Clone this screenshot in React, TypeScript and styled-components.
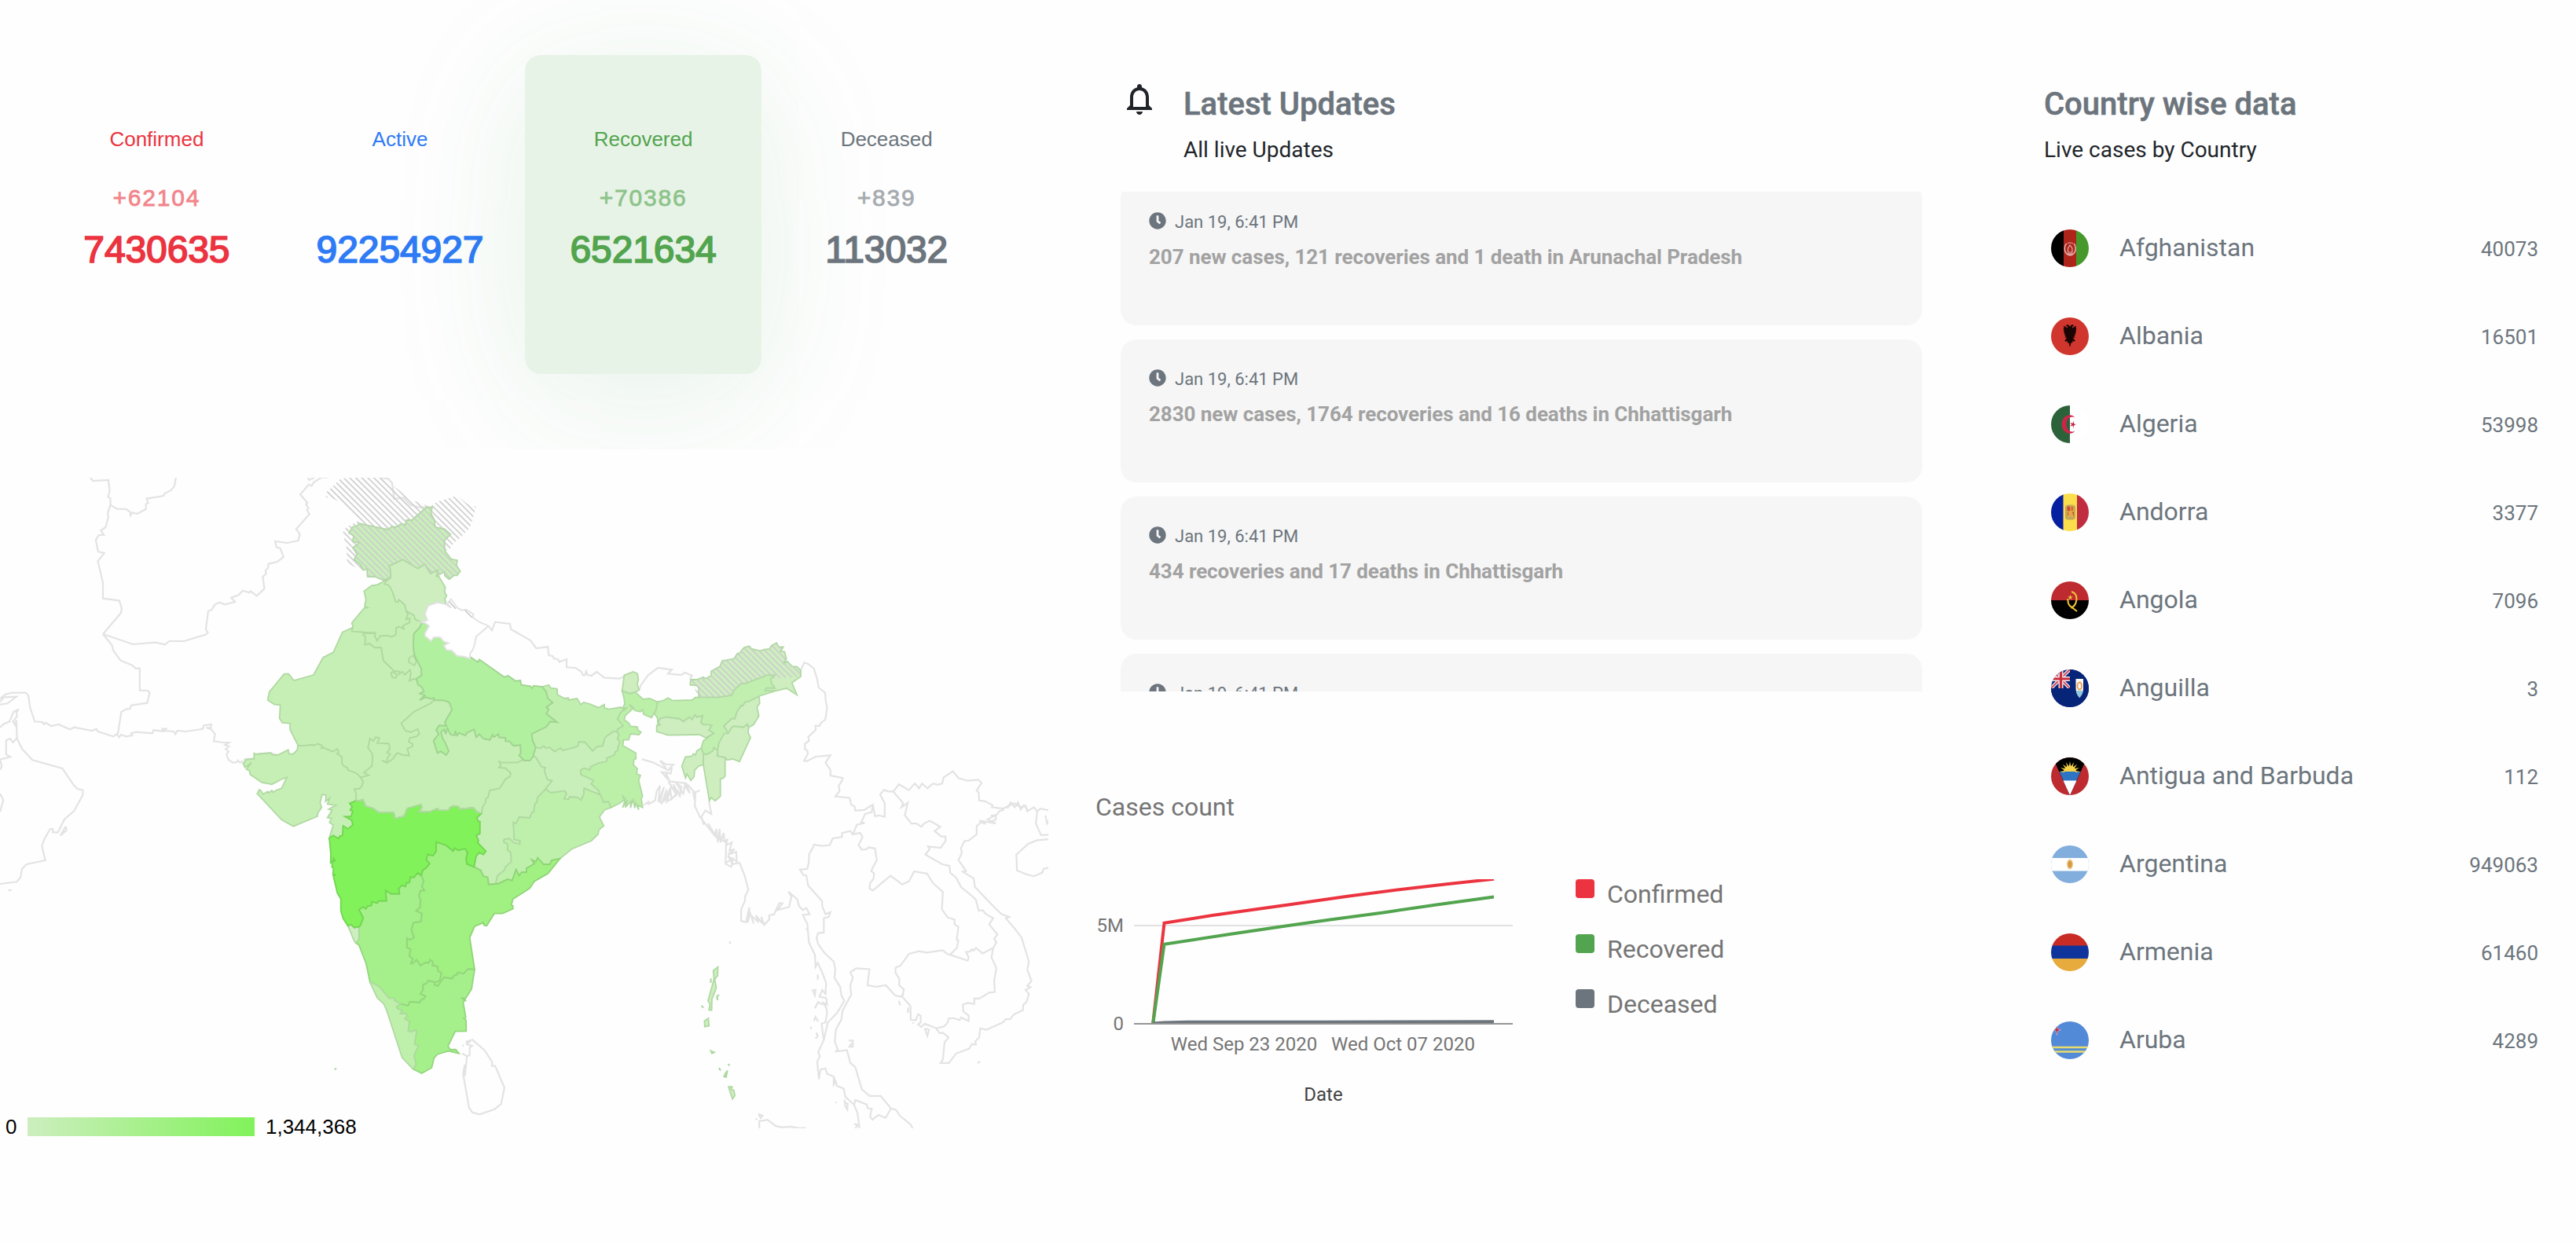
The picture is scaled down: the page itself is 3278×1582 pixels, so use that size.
import React from 'react';
import styled, { createGlobalStyle } from 'styled-components';

const GlobalStyle = createGlobalStyle`
  *, *::before, *::after { box-sizing: border-box; }
  body { margin: 0; background: #fefefe; font-family: Roboto, "Liberation Sans", sans-serif; color: #212529; }
  h2, p, ul { margin: 0; padding: 0; }
  ul { list-style: none; }
`;

const Page = styled.main`
  display: grid;
  grid-template-columns: 1334px 1200px 1fr;
  width: 3278px;
  height: 1582px;
  overflow: hidden;
`;

const Column = styled.section`
  display: flex;
  flex-direction: column;
  min-width: 0;
`;

/* ---------- stats ---------- */

const Stats = styled.div`
  display: flex;
  gap: 8px;
  height: 572px;
  padding: 70px 48px 0 48.6px;
  overflow: hidden;
`;

const StatCard = styled.div<{ $color: string; $active?: boolean }>`
  display: flex;
  flex-direction: column;
  align-items: center;
  width: 301.6px;
  height: 406px;
  padding-top: 88px;
  border-radius: 20px;
  font-family: "Liberation Sans", Arial, sans-serif;
  color: ${(p) => p.$color};
  background: ${(p) => (p.$active ? '#e8f3e7' : 'transparent')};
  box-shadow: ${(p) => (p.$active ? '0 30px 180px rgba(60, 160, 80, 0.12)' : 'none')};
`;

const StatLabel = styled.span`
  font-size: 26px;
  line-height: 39px;
`;

const StatDelta = styled.span`
  height: 45px;
  margin-top: 32px;
  font-size: 30px;
  line-height: 45px;
  letter-spacing: 1.8px;
  -webkit-text-stroke: 0.8px currentColor;
  opacity: 0.6;
`;

const StatTotal = styled.span`
  margin-top: 15px;
  font-size: 48px;
  line-height: 58px;
  letter-spacing: -0.1px;
  -webkit-text-stroke: 1.7px currentColor;
`;

const stats = [
  { label: 'Confirmed', delta: '+62104', total: '7430635', color: '#eb3440' },
  { label: 'Active', delta: '', total: '92254927', color: '#2f7bf6' },
  { label: 'Recovered', delta: '+70386', total: '6521634', color: '#52a44e', active: true },
  { label: 'Deceased', delta: '+839', total: '113032', color: '#6c757d' },
];

/* ---------- map ---------- */

type Point = [number, number];

/* Outlines are stored per tile; each tile has its own origin and unit size. */
const tile = (ox: number, oy: number, sx: number, sy: number) => (s: string): Point[] =>
  s.trim().split(/\s+/).map((pair) => {
    const [x, y] = pair.split(',').map(Number);
    return [ox + x * sx, oy + y * sy];
  });

const third = 1 / 3;
const north = tile(300, 600, third, third);
const east = tile(640, 760, third, third);
const south = tile(300, 980, third, third);
const indochina = tile(680, 900, 660 / 1568, 540 / 1568);
const west = tile(0, 600, 680 / 1568, third);
const gulf = tile(0, 960, 660 / 1568, third);

const rev = (line: Point[]) => [...line].reverse();
const str = (...lines: Point[][]) =>
  lines.flat().map(([x, y]) => `${x.toFixed(1)},${y.toFixed(1)}`).join(' ');

const jkHp = north('592,405 590,370 585,362 638,337 695,371 722,355 743,390 772,377 766,400');
const hpPb = north('592,405 572,420 568,430 580,432 590,443 600,465 610,497 618,500 623,490 645,510 650,532');
const pbHr = north('650,532 658,545 650,565 665,560 663,578 650,583 638,590 642,602 625,593 612,598 612,623 595,632 580,627 552,628 540,647 530,628 533,617');
const pbRj = north('533,617 443,611');
const hrRj = north('533,617 487,618 487,626 495,630 493,662 510,658 530,673 555,672 563,722 605,763 593,768 597,787 612,788 615,776 605,768 615,762 625,765 622,775 637,765 645,777 665,758 668,770 663,800 675,794 690,792');
const hpHr = north('650,532 680,550 685,565 710,577');
const hrUp = north('710,577 705,592 680,620 678,655 680,690 685,708 708,752 710,778 690,792');
const hpUk = north('803,508 770,500 735,512 722,545 732,568 708,575');
const ukUp = north('708,575 725,580 738,590 722,618 723,630 733,636 745,648 757,633 780,633 795,650 812,655 795,665 805,682 825,684 845,704 872,707 893,715');
const rjUp = north('690,792 695,813 712,825 718,840 703,848 722,855 703,873 725,862 745,868 757,865 757,873');
const rjMp = north('757,873 745,885 680,918 632,962 648,990 668,995 695,983 701,1003 690,1012 665,1018 660,1032 675,1040 675,1050 655,1060 663,1085 637,1083 617,1075 607,1087 600,1098 577,1113 558,1103 575,1110 580,1092 590,1080 577,1073 588,1060 585,1040 540,1037 548,1018 535,1015 525,1030 512,1020 505,1055 520,1075 523,1092 520,1125 490,1150 508,1160 477,1168');
const rjGj = north('237,1045 250,1048 293,1044 297,1047 313,1040 330,1047 327,1057 335,1055 370,1070 388,1060 393,1073 386,1077 405,1090 405,1115 415,1127 425,1130 428,1140 460,1152 477,1168');
const gjMh = south('357,260 372,250 393,262 397,252 408,250 410,213 428,225 447,210 443,192 418,178 440,178 447,157 437,153 445,140 435,127 458,118');
const gjMp = south('458,118 460,90 453,73 470,72 480,65 487,45 477,28');
const upMp = north('757,873 795,874 815,882 826,910 798,958 805,972 777,970 765,987 775,1003 755,1028 770,1075 782,1068 803,1083 813,1068 798,1033 790,1020 783,995 795,985 802,1000 808,980 820,1005 836,1007 838,990 845,1008 852,998 877,1008 882,998 910,985 918,1015 930,1003 945,1020 970,1025 980,1005 985,1015 1003,1003 1005,1015 1030,1017 1030,1030 1045,1030 1060,1047 1087,1045 1088,1075 1082,1085 1102,1104');
const mpCg = north('1102,1104 1095,1102 1075,1112 1010,1112 1005,1105 1012,1122 1005,1130 1030,1133 1050,1152 1047,1165 1030,1175 1008,1210 970,1218 963,1245 955,1250 953,1265 943,1280 938,1306');
const mpMh = south('458,118 472,118 485,113 495,138 525,147 545,162 603,163 608,185 643,177 655,147 707,132 710,142 700,160 740,160 770,147 775,153 812,153 820,142 835,137 852,142 855,150 907,144 920,160 938,166');
const mhCg = south('938,166 920,182 925,195 932,197 932,243 918,250 927,270 923,277 955,310 945,323 930,315 917,330 910,370');
const mhTs = south('910,370 882,358 880,337 885,315 875,300 850,307 835,298 830,310 803,287 765,275 765,310 753,327 733,322 727,342 740,358 723,377 715,380 708,403');
const mhKa = south('708,403 695,392 680,410 667,408 663,430 652,430 648,445 635,440 622,453 625,473 593,473 572,460 575,500 545,500 540,508 520,503 518,517 503,520 497,530 487,523 470,533 487,565 475,595 470,598');
const mhGa = south('470,598 453,602 440,590 428,595');
const kaGa = south('470,598 470,648 458,660');
const upCg = east('82,624 103,624 115,608');
const upJh = east('125,573 120,590 115,608');
const cgJh = east('115,608 125,610 148,648 162,650 158,662 170,697 188,700 163,733');
const cgOd = [
  ...east('163,733 132,765 130,783 122,790 118,820 110,823 102,843 62,840 50,865 40,860 43,925'),
  ...south('1085,270 1085,283 1060,277 1045,262 1025,265 1023,275 1038,283 1038,305 1050,315 1052,350 1030,370 1027,382 1000,403 992,435'),
];
const cgAp = south('910,370 935,383 945,405 962,410 965,437 992,435');
const odAp = [
  ...south('992,435 1005,433 1037,417 1055,422 1070,380 1082,403 1092,390 1110,390'),
  ...east('90,1050 90,1035 120,1018 110,1003 125,1010 133,995 155,1020 180,1020 185,1005 218,998'),
];
const upBh = east('150,342 165,362 170,385 190,403 165,420 175,428 165,445 207,478 180,475 165,495 110,522 113,548 125,573');
const bhWb = east('457,425 475,422 450,440 437,465 460,492 437,505 437,513');
const bhJh = east('125,573 145,577 155,568 165,577 178,573 197,590 220,575 228,585 285,570 290,552 313,553 342,587 360,570 380,568 390,535 422,512 437,515');
const jhWb = east('437,515 443,525 437,540 447,553 440,570 437,587 430,590 425,603 397,615 395,628 367,633 335,648 332,660 310,653 297,660 297,677 347,700 337,713 365,738 372,755');
const jhOd = east('372,755 310,730 308,755 298,775 285,765 255,763 250,773 233,770 242,752 238,740 182,747 163,733');
const wbOd = east('372,755 380,770 383,783 403,780 413,803');
const apTn = south('912,762 887,760 870,778 848,773 845,782 833,785 827,797 795,792 772,825 758,820 760,810');
const apKa = south('760,810 778,805 785,775 772,768 770,750 750,747 753,733 742,725 737,737 725,735 705,747 690,725 675,740 668,740 675,720 662,710 667,685 653,678 653,642 665,648 680,640 670,610 678,583 707,578 710,548 688,537 703,525 705,493 698,482 705,460 720,460 710,445 717,423 708,403');
const kaTn = south('760,810 735,805 728,815 715,820 715,840 705,855 725,863 717,875 710,875 702,888 665,885 658,900 630,893');
const kaKl = south('630,893 605,880 605,872 585,872 548,828 520,812 513,812');
const klTn = south('630,893 613,903 617,912 635,918 628,930 650,930 655,940 645,950 663,960 658,997 670,1000 688,993 690,1003 682,1047 697,1053 680,1090 688,1123 677,1142');

const jammu = [
  ...north('563,415'), ...jkHp,
  ...north('797,383 798,398 815,412 833,397 845,397 857,381 842,358 846,340 823,335 802,308 797,300 797,264 820,240 797,220 762,213 757,182 745,160 750,137 728,137 672,186 652,186 648,203 632,200 610,213 597,210 580,222 500,205 472,199 462,208 446,212 432,235 450,245 447,268 472,272 447,292 463,315 452,337 475,355 487,377 501,372 503,402 530,402'),
];
const arunachalHill = east('717,315 740,315 765,305 772,311 795,300 795,283 828,265 837,243 883,235 895,215 902,215 920,193 940,187 950,198 982,205 998,200 1018,198 1025,185 1045,175 1052,190 1070,190 1060,207 1075,208 1082,235 1070,255 1085,245 1105,265 1122,265 1137,280 1137,303');
const arAs = east('1040,358 1000,357 1005,347 1038,347 1025,330 1022,312 1037,298 1008,298 925,330 910,330 883,355 873,375 820,383 747,383');

const states: { fill: string; line?: string; d: Point[] }[] = [
  { fill: '#c8efb9', d: jammu },
  { fill: '#ceeec0', d: [...jkHp, ...north('776,402 800,443 797,460 805,475 798,487'), ...hpUk, ...rev(hpHr), ...rev(hpPb)] },
  { fill: '#c6efb5', d: [...hpPb, ...pbHr, ...pbRj, ...north('447,592 443,578 490,522 503,520 492,515 497,488 490,457 520,435 540,433')] },
  { fill: '#c6efb5', d: [...pbHr, ...hrRj, ...rev(hrUp), ...rev(hpHr)] },
  { fill: '#c6efb5', d: [...rev(hrRj), ...pbRj, ...north('445,597 407,614 373,690 333,711 297,777 222,798 202,773 185,773 128,842 122,873 148,890 170,892 167,943 178,960 207,962 208,987'), ...rjGj, ...rev(rjMp), ...rev(rjUp)] },
  { fill: '#c6efb5', d: north('662,712 678,703 690,725 682,740 660,728') },
  { fill: '#c6efb5', d: [...rev(rjGj), ...north('235,1063 218,1080 203,1078 200,1063 160,1083 140,1082 133,1075 72,1080 70,1073 70,1098 40,1100 28,1115 35,1130 60,1112 40,1137 52,1142 55,1157 100,1188 138,1195 175,1175'), ...south('195,28 175,70 155,77 143,85 138,78 125,88 122,82 105,92 95,78 90,75 82,90 175,190 220,215 312,177 313,165 328,143 322,125 330,93 345,97 343,120 358,108 350,130 382,135 355,150 368,153 350,182 365,185 358,200 372,210'), ...gjMh, ...gjMp] },
  { fill: '#c6efb5', d: [...upMp, ...mpCg, ...rev(mpMh), ...gjMp, ...rev(rjMp)] },
  { fill: '#c6efb5', d: [...mpCg, ...mhCg, ...cgAp, ...rev(cgOd), ...rev(cgJh), ...rev(upCg)] },
  { fill: '#c8efb9', d: [...bhJh, ...jhWb, ...jhOd, ...rev(cgJh), ...rev(upJh)] },
  { fill: '#c1efb0', d: [...east('150,342 175,335 183,347 207,350 208,372 235,387 250,385 250,393 283,387 297,410 308,402 332,408 365,422 387,410 388,423 405,428 450,420'), ...bhWb, ...rev(bhJh), ...rev(upBh)] },
  { fill: '#bef0ac', d: [...jhOd, ...cgOd, ...odAp, ...east('262,962 338,930 363,905 367,888 385,873 368,840 388,812'), ...rev(wbOd)] },
  { fill: '#bcf0a9', d: [...bhWb, ...jhWb, ...wbOd, ...east('443,788 462,775 458,760 468,770 457,803 475,775 467,803 488,780 487,805 497,770 503,805 506,785 518,812 515,795 533,803 528,770 533,760 518,700 525,680 510,675 513,655 498,640 500,620 508,617 507,595 458,567 460,545 480,545 487,522 520,525 527,515 515,508 513,495 487,493 480,480 463,468 467,452 495,427 482,410 497,420 503,433 525,437 533,430 537,447 567,460 578,443 585,430 590,400 560,387 535,390 505,362 485,368 455,358 462,385 465,408')] },
  { fill: '#b1f09e', line: '#a0d391', d: [...hrUp, ...rjUp, ...upMp, ...upCg, ...rev(upJh), ...rev(upBh), ...north('1137,818 1132,828 1125,820 1090,815 1087,798 1068,800 1040,780 1025,785 930,718 925,728 895,708'), ...rev(ukUp)] },
  { fill: '#a0f082', line: '#8fd476', d: [...mhTs, ...rev(apKa), ...rev(apTn), ...south('893,640 912,597 945,583 948,593 958,595 987,548 1018,548 1058,530 1058,518 1052,515 1058,493'), ...east('102,1112 120,1085 172,1055'), ...rev(odAp), ...rev(cgAp)] },
  { fill: '#a5f08a', line: '#94d57e', d: [...mhKa, ...kaGa, ...south('470,668 497,737'), ...rev(kaKl), ...rev(kaTn), ...apKa] },
  { fill: '#a5f08a', line: '#94d57e', d: [...apTn, ...kaTn, ...klTn, ...south('710,1158 748,1137 757,1100 770,1085 812,1073 852,1082 840,1067 820,1068 810,1055 838,998 880,997 879,955 870,948 878,945 868,885 877,880 860,870 877,873 900,837')] },
  { fill: '#bef0ac', d: [...rev(kaKl), ...klTn, ...south('635,1098 575,915 565,893 540,870')] },
  { fill: '#ceeec0', d: [...mhGa, ...south('452,652'), ...rev(kaGa)] },
  { fill: '#81f25a', line: '#72d651', d: [...mhKa, ...mhGa, ...south('410,567 401,537 401,492 388,470 372,403 382,401 371,398 373,375 367,370 369,352 382,345 373,345 375,333 368,352 362,355 363,320 357,260'), ...gjMh, ...mpMh, ...mhCg, ...mhTs] },
  { fill: '#ceeec0', d: east('455,358 463,298 497,285 513,292 517,315 513,332 520,355 505,362 485,368') },
  { fill: '#ceeec0', d: [...arunachalHill, ...east('1103,327 1122,373 1083,348'), ...arAs, ...east('748,350 742,338 715,335')] },
  { fill: '#ceeec0', d: east('978,378 980,405 970,420 977,453 957,487 938,497 933,485 918,497 885,493 875,495 860,520 843,492 875,462 885,465 893,437 910,413 915,415 925,400 940,397') },
  { fill: '#c1efb0', d: [...east('978,378'), ...arAs, ...east('735,383 722,393 648,395 630,385 612,395 590,400 585,430 578,443 590,463 592,490 625,458 670,463 688,475 713,458 722,468 733,450 740,458 763,453 755,478 765,487 797,490 785,508 805,520 777,540 765,548 757,575 765,598 780,600 802,587 805,575 820,585 825,555 860,520 843,492 875,462 885,465 893,437 910,413 915,415 925,400 940,397')] },
  { fill: '#ceeec0', d: east('587,513 587,490 600,488 592,480 600,463 625,458 670,465 673,463 688,475 713,458 722,468 733,450 740,458 763,453 755,478 765,487 787,487 797,490 785,508 805,520 775,537 750,525 630,527') },
  { fill: '#ceeec0', d: east('860,520 875,495 885,493 918,497 933,485 938,503 935,515 945,537 903,628 877,618 855,622 848,612 820,607 820,583 825,555 845,520') },
  { fill: '#ceeec0', d: east('780,600 802,587 805,575 820,585 818,607 848,612 848,683 840,692 830,693 830,760 810,778 795,765 788,778 765,640 765,600') },
  { fill: '#ceeec0', d: east('757,577 765,598 765,640 747,645 732,660 730,685 717,700 703,675 697,690 683,645 697,610 722,607 727,598 735,603 740,587') },
  { fill: '#ceeec0', d: indochina('555,960 541,973 543,1005 525,1085 531,1098 528,1119 536,1120 537,1078 550,1038 545,1005 554,992') },
  { fill: '#ceeec0', d: indochina('514,1160 526,1150 528,1178 515,1181') },
  { fill: '#ceeec0', d: indochina('587,1403 598,1403 595,1412 603,1416 606,1435 599,1448 591,1420') },
  { fill: '#a8d49c', d: indochina('533,1270 544,1276 537,1280') },
  { fill: '#a8d49c', d: indochina('578,1352 584,1343 580,1368 573,1365') },
];

const isletDashes = [
  indochina('505,1103 511,1111'), indochina('558,1063 552,1070 554,1083'), indochina('558,1333 563,1343'),
  indochina('586,1319 590,1325'), indochina('534,1003 533,1019'), south('377,1144 384,1139'),
];

const uttarakhand = [...hpUk, ...ukUp, ...north('895,695 905,680 912,660 918,630 965,590 930,575 905,557 907,545 880,527 862,530 845,520 822,488 807,505 822,520')];

const worldLines: Point[][] = [
  west('265,24 273,36 318,33 322,75 317,97 324,103 324,128 343,143 370,144 382,155 383,167 388,157 402,162 428,144 428,125 435,120 430,104 480,93 483,84 502,72 512,55 516,24'),
  west('324,128 316,160 318,175 310,213 296,225 305,242 290,243 281,262 288,306 306,312 287,343 302,425 302,485 350,493 357,522 355,540 302,621'),
  west('302,621 390,660 456,653 484,661 497,648 540,648 603,623 610,615 604,603 611,533 621,528 631,508 644,500 660,508 690,498 678,482 700,472 712,455 732,463 735,457 753,475 776,448 771,402 781,390 779,378 786,370 788,353 815,344 832,326 822,293 812,290 807,267 843,273 875,264 880,240 869,220 908,163 901,148 905,140 898,125 902,120 881,88 906,50 915,55 920,42 942,24 965,22'),
  west('903,22 907,33 925,22'),
  west('302,621 328,662 333,685 354,722 388,740 398,752 410,752 410,836 434,837 439,846 432,884 385,893 381,907 372,907 356,918 346,1000 342,1008'),
  west('0,890 22,886 48,860 12,862 0,880'),
  west('0,868 15,852 35,845 75,845 83,855 88,900 102,955 125,957 128,965 135,960 150,972 172,966 205,985 218,977 270,990 283,983 287,993 333,1012 342,1003 350,1015 355,1005 370,1012 388,1008 385,1000 400,995 447,1000 450,988 478,992 476,983 487,983 482,990 510,993 515,1003 520,990 545,993 595,983 598,970 620,966 618,980 605,978 620,985 631,1003 627,1030 655,1035 672,1035 660,1045 672,1050 662,1060 671,1070 665,1080 670,1100 683,1112 695,1110 698,1103 705,1112 712,1104'),
  west('715,1100 745,1095 760,1078 795,1075 815,1083'),
  west('0,978 10,965 28,955 40,918 55,908 48,920 50,935 38,955 44,968 48,950 50,1020 65,1060 95,1102 183,1134 216,1197 227,1212 243,1217 243,1235 217,1297 189,1328 170,1378 155,1378 155,1365 147,1365 130,1405 123,1430 133,1485 78,1500 65,1517 60,1550 49,1567 0,1575'),
  west('193,1355 195,1370 177,1390 193,1355'),
  west('48,1020 38,1035 30,1020 18,1027 18,1080 30,1090 0,1100 5,1125 0,1140'),
  west('0,1230 10,1255 0,1300'),
  gulf('25,519 35,519'),
  north('555,24 583,28 597,45 605,105 640,100 665,127 700,137 745,137'),
  east('-55,110 -42,127 -30,95 27,102 30,122 105,165 127,195 172,190 175,222 190,225 195,235 210,237 215,247 243,237 243,268 277,270 300,285 305,298 313,298 318,283 323,297 338,300 358,285 388,308 445,311 462,303'),
  east('520,355 527,335 555,297 592,270 645,277 630,292 680,297 695,288 722,300 713,313'),
  [...east('1137,280 1150,250 1165,255 1187,273 1200,315 1205,345 1230,365 1232,395'), ...indochina('885,0 880,45 865,60 862,70 850,68 850,85 828,110 830,125 818,135 818,155 825,160 827,172 815,198 823,200 850,183 895,178 880,205 895,232 895,253 932,262 930,272 920,290 923,310 910,330 953,335 958,360 968,367 970,382 997,380 1023,360 1030,403 1042,400 1059,405 1059,355 1045,323 1057,306 1070,312 1085,312 1102,285 1132,307 1150,282 1163,300 1172,282 1188,300 1205,282 1220,287 1233,282 1237,260 1265,237 1282,262 1310,272 1342,268 1352,280 1337,308 1343,315 1345,345 1363,348 1385,362 1383,370 1418,375 1450,355 1470,370 1485,365 1490,385 1510,370 1520,385 1530,375 1568,384')],
  indochina('1023,360 1020,388 1000,395 988,425 998,428 975,435 963,470 985,465 992,480 980,510 990,527 1005,525 1010,518 1030,522 1035,565 1018,605 1027,615 1025,635 1015,650 1013,670 1023,678 1055,645 1065,635 1077,623 1112,655 1133,643 1148,607 1187,615 1205,650 1235,683 1232,747 1250,778 1270,785 1270,803 1282,812 1277,860 1282,862 1277,890 1257,915'),
  indochina('963,470 955,458 930,465 930,480 902,485 893,510 870,513 845,508 843,517 830,545 830,570 825,598 803,600 813,620 822,622 828,660 870,717 870,735 880,765 895,758 890,775 875,780 875,833 858,835 853,853 858,875 877,908 905,940 910,970 907,1000 925,1035 928,1065 937,1085 915,1130 887,1165 875,1230 858,1275 863,1290 855,1310 860,1375 865,1340 880,1335 885,1355 905,1365 915,1400 935,1410 940,1440 967,1470 977,1500 983,1558'),
  indochina('1085,312 1115,355 1110,370 1129,353 1120,400 1140,430 1155,430 1170,442 1178,430 1195,420 1227,442 1210,458 1230,478 1243,478 1243,495 1228,520 1190,515 1195,525 1182,545 1232,580 1255,587 1257,612 1275,630 1290,665 1320,695 1335,712 1343,752 1355,750 1365,765 1387,780 1375,803 1400,840 1390,855 1397,870 1387,890 1382,925 1397,965 1390,1010 1392,1053 1375,1055 1345,1077 1330,1077 1330,1097 1310,1093 1295,1100 1297,1125 1313,1140 1313,1160 1290,1147 1285,1157 1270,1150 1253,1150 1250,1165 1238,1180 1215,1187'),
  indochina('1257,915 1248,912 1235,898 1187,907 1162,902 1132,912 1107,955 1092,963 1092,982 1103,1003 1103,1028 1117,1043 1112,1070 1137,1105 1138,1155 1153,1157 1160,1135 1168,1140 1168,1165 1160,1173 1170,1182 1180,1170 1215,1187 1225,1205 1235,1203 1252,1220 1240,1240 1235,1303 1228,1315 1253,1315 1275,1280 1315,1262 1322,1245 1335,1247 1333,1235 1345,1220 1348,1187 1367,1192 1417,1165 1425,1153 1438,1153 1450,1135 1477,1120 1478,1100 1488,1090 1495,1060 1485,1045 1500,1035 1490,1030 1503,1012 1490,970 1495,940 1473,852 1450,815 1425,780 1436,775 1413,765 1395,745 1332,665 1328,633 1295,608 1305,605 1282,565 1292,540 1290,520 1300,495 1313,493 1337,470 1337,440 1350,425 1365,432 1345,420 1375,425 1395,430 1370,415 1385,405 1400,395 1405,385 1420,378'),
  indochina('1380,400 1395,400 1395,415 1375,425'),
  indochina('1430,375 1440,352 1452,370 1462,352 1470,378 1480,362 1492,380'),
  indochina('1257,915 1310,937 1313,925 1305,905 1318,903 1322,895 1328,900 1335,890 1355,910 1387,890'),
  indochina('1117,1060 1107,1070 1090,1065 1063,1028 1035,1033 1007,1028 1013,968 973,965 955,980 963,1000 955,1030 958,1063 932,1120 928,1155 912,1190 908,1235 917,1265 912,1272 945,1268 955,1315 970,1330 990,1412 1013,1437 1047,1437 1078,1483 1093,1488 1105,1510 1137,1542 1145,1560'),
  indochina('967,1470 970,1452 1005,1468 1007,1482 1020,1485 1015,1513 1022,1525 1040,1507 1062,1518 1078,1483'),
  indochina('528,350 535,395 517,382 505,405 512,435'),
  indochina('455,278 470,295 487,320 485,365 500,405 545,475 550,450 555,500 560,450 563,500 572,465 575,495 583,490 580,510 597,500 590,530 605,525 585,545 610,535 612,570 585,550 600,580 620,575 625,590 635,620 647,675 637,700 637,715 625,747 625,790 640,795 650,740 645,795 652,760 663,800 655,770 678,795 670,770 690,800 686,775 695,805 710,785 710,770 725,765 740,725 750,725 735,750 770,738 777,700 768,682 795,710 800,735 812,750 822,742 832,765 812,768 818,785 825,800 830,870 848,915 850,960 857,945 870,980 882,1020 880,1060 870,1045 862,1070 882,1075 885,1100 870,1090 882,1110 885,1130 880,1165 868,1170 875,1230'),
  indochina('525,430 550,480 580,500 578,580 595,590 600,560 580,575'),
  indochina('325,192 360,205 400,230 380,197 398,212 420,212 405,232 415,228 412,245 385,240 400,262 398,245 410,275 450,280 465,290'),
  indochina('330,362 345,350 345,358 365,345 370,310 380,290 375,350 392,295 380,350 385,355 400,305 390,350 415,290 400,350 430,325 405,275 430,320 420,285 440,328 445,295 428,280 450,320 455,290 470,318 460,285'),
  indochina('395,345 412,315 415,340 435,310 440,330'),
  indochina('485,345 480,318 500,308'),
  indochina('1568,487 1520,492 1493,505 1457,545 1459,603 1487,618 1510,625 1535,612 1540,597 1568,590'),
  indochina('1520,387 1516,430 1532,473 1568,470 1568,462'),
  indochina('1545,400 1550,430 1560,410'),
  indochina('857,988 857,1007'), indochina('838,1048 850,1045 848,1065 843,1052'), indochina('848,1113 858,1090 870,1100'),
  indochina('845,1160 850,1145 858,1162'), indochina('835,1180 837,1190'), indochina('852,1203 857,1215 850,1225'),
  indochina('950,1232 963,1232 963,1255 952,1255 960,1242'), indochina('1180,1187 1193,1192 1188,1215 1180,1187'),
  indochina('1340,1316 1347,1309'), indochina('592,865 591,875'), indochina('1102,1085 1106,1102'), indochina('1130,1110 1130,1130'),
  indochina('1144,1165 1145,1170'), indochina('910,1461 914,1460'), indochina('937,1450 940,1475 946,1487 947,1465 940,1462'),
  indochina('905,1368 905,1395 912,1380'), indochina('967,1540 978,1545 970,1556'), indochina('822,818 822,823'),
  indochina('680,1560 680,1530 705,1525 730,1548 750,1553 775,1550 800,1556 820,1555'),
  indochina('677,1503 690,1510 684,1518 678,1506'), indochina('669,1521 674,1524'),
  gulf('1408,1098 1428,1090 1465,1130 1488,1175 1487,1190 1497,1190 1525,1273 1515,1335 1495,1355 1450,1375 1428,1367 1418,1350 1400,1220 1405,1185 1405,1230 1412,1153 1420,1148 1420,1120 1427,1113 1412,1108 1418,1100 1408,1102'),
  gulf('1397,1142 1412,1153'), gulf('1398,1110 1402,1114'),
];

const disputed = north('345,100 345,80 370,58 400,28 440,24 570,24 600,55 655,95 660,108 700,118 740,135 770,115 830,97 850,97 885,125 918,135 905,180 893,215 860,250 830,275 815,300 797,302 700,300 480,378 455,365 425,350 423,290 408,235 420,215 455,195 470,188 435,155 400,120 365,100');

const MapSvg = styled.svg`
  display: block;
  width: 1334px;
  height: 828px;
  margin-top: 36px;
`;

const WorldLine = styled.polyline`
  fill: none;
  stroke: #e3e3e3;
  stroke-width: 2.2;
`;

const IndiaMap = () => (
  <MapSvg viewBox="0 608 1334 828">
    <defs>
      <pattern id="hatch" width="5.45" height="5.45" patternUnits="userSpaceOnUse" patternTransform="rotate(45)">
        <rect width="5.45" height="1.6" fill="#cbcbcb" />
      </pattern>
    </defs>
    {worldLines.map((line, i) => (
      <WorldLine key={i} points={str(line)} />
    ))}
    <polygon points={str(disputed)} fill="url(#hatch)" />
    {states.map((s, i) => (
      <polygon key={i} points={str(s.d)} fill={s.fill} stroke={s.line ?? '#b0d9a2'} strokeWidth={1.8} />
    ))}
    {isletDashes.map((line, i) => (
      <polyline key={i} points={str(line)} fill="none" stroke="#a8d49c" strokeWidth={2} />
    ))}
    <polyline points={str(mpMh)} fill="none" stroke="#b3d9a6" strokeWidth={1.8} />
    <polygon points={str(jammu)} fill="url(#hatch)" />
    <polygon points={str(arunachalHill, arAs.slice(5))} fill="url(#hatch)" />
    <polygon points={str(uttarakhand)} fill="#ffffff" stroke="#e3e3e3" strokeWidth={2} />
    <polyline points={str(north('815,497 840,524'))} stroke="#c4c4c4" strokeWidth={1.4} fill="none" />
    <polyline points={str(north('875,530 902,557'))} stroke="#c4c4c4" strokeWidth={1.4} fill="none" />
  </MapSvg>
);

const MapLegend = styled.div`
  display: flex;
  align-items: center;
  height: 26px;
  margin-top: -15px;
  padding-left: 7px;
  font: 26px/26px "Liberation Sans", Arial, sans-serif;
  color: #000;
`;

const MapScale = styled.div`
  width: 289px;
  height: 24px;
  margin: 0 14px 0 13.5px;
  background: linear-gradient(to right, #cdeebf, #81f25a);
`;

/* ---------- headings ---------- */

const HeadingText = styled.div`
  display: flex;
  flex-direction: column;
  gap: 13px;
`;

const Title = styled.h2`
  font-size: 40px;
  line-height: 48px;
  font-weight: 500;
  color: #6c757d;
  -webkit-text-stroke: 0.6px currentColor;
`;

const Subtitle = styled.p`
  font-size: 28px;
  line-height: 42px;
`;

/* ---------- updates ---------- */

const Updates = styled.div`
  padding: 109px 88px 0 92px;
`;

const UpdatesHeader = styled.div`
  display: flex;
  gap: 32px;
  height: 135px;
`;

const Bell = styled.svg`
  width: 48px;
  height: 48px;
  margin-top: -7px;
  fill: #212529;
`;

const UpdateList = styled.ul`
  display: flex;
  flex-direction: column;
  gap: 18px;
  height: 636px;
  overflow: hidden;

  & > li:first-child {
    margin-top: -12px;
  }
`;

const UpdateCard = styled.li`
  flex: none;
  height: 182px;
  padding: 34px 36px;
  border-radius: 20px;
  background: #f6f6f6;
`;

const UpdateTime = styled.div`
  display: flex;
  align-items: center;
  gap: 11px;
  font-size: 22px;
  line-height: 33px;
  color: #6c757d;
`;

const Clock = styled.svg`
  width: 22px;
  height: 22px;
  margin-top: -3px;
  fill: currentColor;
`;

const UpdateText = styled.p`
  margin-top: 9px;
  font-size: 26px;
  line-height: 39px;
  font-weight: 700;
  letter-spacing: -0.07px;
  color: #a2a2a2;
`;

const updates = [
  '207 new cases, 121 recoveries and 1 death in Arunachal Pradesh',
  '2830 new cases, 1764 recoveries and 16 deaths in Chhattisgarh',
  '434 recoveries and 17 deaths in Chhattisgarh',
  '',
];

/* ---------- chart ---------- */

const ChartSection = styled.div`
  padding: 127px 0 0 60px;
`;

const ChartTitle = styled.p`
  font-size: 32px;
  line-height: 40px;
  color: #757575;
`;

const ChartBody = styled.div`
  display: flex;
`;

const ChartSvg = styled.svg`
  width: 560px;
  height: 373px;
  font-family: Roboto, sans-serif;
  font-size: 24px;
  fill: #757575;
`;

const ChartLine = styled.polyline`
  fill: none;
  stroke-width: 4;
`;

const ChartLegend = styled.ul`
  display: flex;
  flex-direction: column;
  gap: 32px;
  padding: 72px 0 0 51px;
`;

const LegendItem = styled.li<{ $color: string }>`
  display: flex;
  gap: 16px;
  font-size: 32px;
  line-height: 38px;
  color: #757575;

  &::before {
    content: '';
    width: 24px;
    height: 24px;
    border-radius: 4px;
    background: ${(p) => p.$color};
  }
`;

const chartTile = tile(1380, 780, 860 / 1568, 660 / 1568);

const CasesChart = () => (
  <ChartSvg viewBox="1394 1047 560 373">
    <defs>
      <clipPath id="plot"><rect x="1443" y="1119" width="482" height="184.5" /></clipPath>
    </defs>
    <rect x="1443" y="1177" width="482" height="2" fill="#e2e2e2" />
    <g clipPath="url(#plot)">
      <ChartLine stroke="#eb3440" points={str(chartTile('159,1242 185,938 300,914 470,883 610,857 730,837 840,820 950,805'))} />
      <ChartLine stroke="#52a44e" points={str(chartTile('159,1242 185,1002 340,971 470,946 570,928 700,905 820,882 950,859'))} />
      <ChartLine stroke="#6c757d" points={str(chartTile('159,1241 185,1239 240,1237 550,1237 950,1236'))} />
    </g>
    <rect x="1443" y="1302" width="482" height="2" fill="#959595" />
    <text x="1430" y="1186" textAnchor="end">5M</text>
    <text x="1430" y="1311" textAnchor="end">0</text>
    <text x="1583" y="1336.5" textAnchor="middle">Wed Sep 23 2020</text>
    <text x="1785.5" y="1336.5" textAnchor="middle">Wed Oct 07 2020</text>
    <text x="1684" y="1400.5" textAnchor="middle" fill="#424242">Date</text>
  </ChartSvg>
);

/* ---------- countries ---------- */

const Countries = styled(Column)`
  padding: 109px 48px 0 67px;
`;

const CountryList = styled.ul`
  margin-top: 48px;
`;

const CountryRow = styled.li`
  display: flex;
  align-items: center;
  height: 112px;
  padding-left: 9px;
  color: #6c757d;
`;

const FlagSvg = styled.svg`
  width: 48px;
  height: 48px;
  margin-right: 39px;
  border-radius: 50%;
`;

const CountryName = styled.span`
  flex: 1;
  font-size: 32px;
  line-height: 42px;
  padding-bottom: 2px;
`;

const CountryCount = styled.span`
  padding-top: 2px;
  font-size: 26px;
  line-height: 39px;
`;

const rays = Array.from({ length: 9 }, (_, i) => {
  const a = Math.PI + (i * Math.PI) / 8;
  const n = 0.16;
  const c = (r: number, t: number) => `${24 + r * Math.cos(t)},${18 + r * Math.sin(t)}`;
  return `${c(7, a - n)} ${c(13, a)} ${c(7, a + n)}`;
});

const countries: { name: string; count: string; flag: React.ReactNode }[] = [
  {
    name: 'Afghanistan', count: '40073',
    flag: (
      <>
        <path d="M0 0h16v48H0z" fill="#000" /><path d="M16 0h16v48H16z" fill="#ae241a" /><path d="M32 0h16v48H32z" fill="#46982b" />
        <g fill="none" stroke="#e3b0ac">
          <path d="M19.5 18a7 8.6 0 1 0 9.5 0" strokeWidth="1.6" /><path d="M20.5 18a5 3 0 0 1 7.5 0" strokeWidth="1" />
          <path d="M21.5 29v-5l2.7-4 2.7 4v5z" strokeWidth="1.2" /><path d="M21 31h6.5" strokeWidth="1.6" />
        </g>
      </>
    ),
  },
  {
    name: 'Albania', count: '16501',
    flag: (
      <>
        <path d="M0 0h48v48H0z" fill="#d0362d" />
        <path d="M24 12l-1-2-3-1-1 2 2 .5v2l-5-3 .5 3-1 1 1.2 1.5-1 1.5 1.5 1.3-1 1.5 1.7 1-1 1.7 2 .5-1.5 2.5 3-.5-3 4 1 1.5 2-1.5.5 3 1.5-.5 1.6 6 1.6-6 1.500.5.5-3 2 1.5 1-1.5-3-4 3 .5-1.5-2.5 2-.5-1-1.7 1.7-1-1-1.5 1.5-1.3-1-1.5 1.2-1.5-1-1 .5-3-5 3v-2l2-.5-1-2-3 1z" fill="#1a0504" />
      </>
    ),
  },
  {
    name: 'Algeria', count: '53998',
    flag: (
      <>
        <path d="M0 0h24v48H0z" fill="#2c6239" /><path d="M24 0h24v48H24z" fill="#fff" />
        <path d="M30.5 15.5a10 11.8 0 1 0 0 17 7.5 9.6 0 1 1 0-17z" fill="#c9264a" />
        <path d="M28.5 19.5l-1 3.2-3.5-.8 2.3 2.3-2.3 2.3 3.5-.7 1 3.2.5-3.5 2.5-1.2-2.5-1.2z" fill="#c9264a" />
      </>
    ),
  },
  {
    name: 'Andorra', count: '3377',
    flag: (
      <>
        <path d="M0 0h16v48H0z" fill="#0420a0" /><path d="M15.5 0H33v48H15.5z" fill="#fade4b" /><path d="M33 0h15v48H33z" fill="#c02c40" />
        <rect x="18" y="14.5" width="13" height="19" rx="4" fill="#c3a65c" /><rect x="20" y="16.5" width="9" height="13.5" rx="1" fill="#e0a848" />
        <path d="M21 17h2.5v5H21zM25.5 17v5M27.5 17v5M21.5 24v4M27 24h1.5v4" fill="#cf4b32" stroke="#cf4b32" />
      </>
    ),
  },
  {
    name: 'Angola', count: '7096',
    flag: (
      <>
        <path d="M0 0h48v24H0z" fill="#bd2a2f" /><path d="M0 24h48v24H0z" fill="#000" />
        <path d="M26 13c5 1.5 7 6 6.3 11-.6 4.500-3 8-6.8 10M21.5 22c-.5 5 1 9 5 11l6.5 5" fill="none" stroke="#f3c736" strokeWidth="2" />
        <path d="M24.5 17l.8 2.3h2.4l-2 1.5.7 2.4-1.9-1.4-1.9 1.4.7-2.4-2-1.5h2.4z" fill="#f3c736" />
      </>
    ),
  },
  {
    name: 'Anguilla', count: '3',
    flag: (
      <>
        <path d="M0 0h48v48H0z" fill="#062478" />
        <path d="M0 0l24 24M24 0L0 24" stroke="#e9dde8" strokeWidth="4.5" /><path d="M0 0l24 24M24 0L0 24" stroke="#cc3d4a" strokeWidth="1.6" />
        <path d="M12.5 0v24M0 12h24" stroke="#f2e8ee" strokeWidth="6" /><path d="M12.5 0v24M0 12h24" stroke="#c82f3b" strokeWidth="3.2" />
        <path d="M24 0h24v48H0V24h24z" fill="#062478" />
        <path d="M31.5 12h9.5v12c0 5-2 9-4.8 12-2.7-3-4.7-7-4.7-12z" fill="#fbf8f2" /><path d="M31.7 27h9.2c-.6 3.5-2.3 6.5-4.7 9-2.4-2.5-4-5.5-4.5-9z" fill="#8fc7dc" />
        <ellipse cx="36.3" cy="21" rx="2.8" ry="4.5" fill="none" stroke="#ec9c4e" strokeWidth="1.8" />
      </>
    ),
  },
  {
    name: 'Antigua and Barbuda', count: '112',
    flag: (
      <>
        <path d="M0 0h48v48H0z" fill="#bd2a2f" /><path d="M2 0h44L24 48z" fill="#000" />
        <path d="M10.5 18h27L24 48z" fill="#2e74c4" /><path d="M15.5 29.5h17L24 48z" fill="#fff" />
        <path d="M16 18a8 7.5 0 0 1 16 0z" fill="#f6d14a" />
        {rays.map((r) => <polygon key={r} points={r} fill="#f6d14a" />)}
      </>
    ),
  },
  {
    name: 'Argentina', count: '949063',
    flag: (
      <>
        <path d="M0 0h48v48H0z" fill="#82aedd" /><path d="M0 16h48v16.5H0z" fill="#fff" />
        <ellipse cx="24" cy="24" rx="4" ry="6.5" fill="#e9c98f" /><ellipse cx="24" cy="24" rx="2.6" ry="4.5" fill="#d69a3c" />
      </>
    ),
  },
  {
    name: 'Armenia', count: '61460',
    flag: (
      <>
        <path d="M0 0h48v16H0z" fill="#c82c25" /><path d="M0 15.5h48V32H0z" fill="#0f349c" /><path d="M0 32h48v16H0z" fill="#e7aa3c" />
      </>
    ),
  },
  {
    name: 'Aruba', count: '4289',
    flag: (
      <>
        <path d="M0 0h48v48H0z" fill="#538ad8" /><path d="M0 33h48M0 38.5h48" stroke="#e8dc6a" strokeWidth="2.4" />
        <path d="M7.5 5l1.3 4.5 3.7 1.3-3.7 1.3-1.3 5.2-1.3-5.2-3.7-1.3 3.7-1.3z" fill="#b5304a" stroke="#dfc6df" strokeWidth=".6" />
      </>
    ),
  },
];

export default function App() {
  return (
    <>
      <GlobalStyle />
      <Page>
        <Column>
          <Stats>
            {stats.map((s) => (
              <StatCard key={s.label} $color={s.color} $active={s.active}>
                <StatLabel>{s.label}</StatLabel>
                <StatDelta>{s.delta}</StatDelta>
                <StatTotal>{s.total}</StatTotal>
              </StatCard>
            ))}
          </Stats>
          <IndiaMap />
          <MapLegend>
            <span>0</span>
            <MapScale />
            <span>1,344,368</span>
          </MapLegend>
        </Column>

        <Column>
          <Updates>
            <UpdatesHeader>
              <Bell viewBox="0 0 24 24">
                <path d="M12 22c1.1 0 2-.9 2-2h-4c0 1.1.9 2 2 2zm6-6v-5c0-3.07-1.63-5.64-4.5-6.32V4c0-.83-.67-1.5-1.5-1.5s-1.5.67-1.5 1.5v.68C7.64 5.36 6 7.92 6 11v5l-2 2v1h16v-1l-2-2zm-2 1H8v-6c0-2.48 1.51-4.5 4-4.5s4 2.02 4 4.5v6z" />
              </Bell>
              <HeadingText>
                <Title>Latest Updates</Title>
                <Subtitle>All live Updates</Subtitle>
              </HeadingText>
            </UpdatesHeader>
            <UpdateList>
              {updates.map((text) => (
                <UpdateCard key={text}>
                  <UpdateTime>
                    <Clock viewBox="0 0 512 512">
                      <path d="M256,8C119,8,8,119,8,256S119,504,256,504,504,393,504,256,393,8,256,8Zm92.49,313h0l-20,25a16,16,0,0,1-22.49,2.5h0l-67-49.72a40,40,0,0,1-15-31.23V112a16,16,0,0,1,16-16h32a16,16,0,0,1,16,16V256l58,42.5A16,16,0,0,1,348.49,321Z" />
                    </Clock>
                    Jan 19, 6:41 PM
                  </UpdateTime>
                  {text && <UpdateText>{text}</UpdateText>}
                </UpdateCard>
              ))}
            </UpdateList>
          </Updates>
          <ChartSection>
            <ChartTitle>Cases count</ChartTitle>
            <ChartBody>
              <CasesChart />
              <ChartLegend>
                <LegendItem $color="#eb3440">Confirmed</LegendItem>
                <LegendItem $color="#52a44e">Recovered</LegendItem>
                <LegendItem $color="#6c757d">Deceased</LegendItem>
              </ChartLegend>
            </ChartBody>
          </ChartSection>
        </Column>

        <Countries>
          <HeadingText>
            <Title>Country wise data</Title>
            <Subtitle>Live cases by Country</Subtitle>
          </HeadingText>
          <CountryList>
            {countries.map((c) => (
              <CountryRow key={c.name}>
                <FlagSvg viewBox="0 0 48 48">{c.flag}</FlagSvg>
                <CountryName>{c.name}</CountryName>
                <CountryCount>{c.count}</CountryCount>
              </CountryRow>
            ))}
          </CountryList>
        </Countries>
      </Page>
    </>
  );
}
